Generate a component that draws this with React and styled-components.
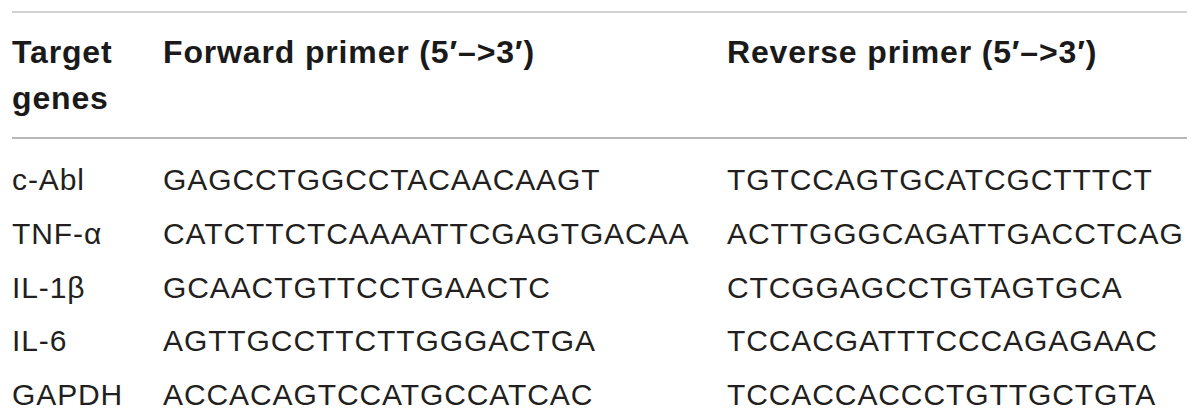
import styled, { createGlobalStyle } from "styled-components";

const GlobalStyle = createGlobalStyle`
  html, body {
    margin: 0;
    padding: 0;
    background: #fff;
  }
  body {
    font-family: "Liberation Sans", Arial, Helvetica, sans-serif;
    color: #231f20;
  }
`;

const Page = styled.div`
  padding: 11px 13px 0 12px;
`;

const Table = styled.div`
  display: grid;
  grid-template-columns: 151px 564px 1fr;
  border-top: 2px solid #d2d2d2;
`;

const HeadCell = styled.div`
  font-weight: 700;
  font-size: 32px;
  line-height: 46px;
  letter-spacing: 0.85px;
  color: #1a1a1a;
  padding: 16px 0 16px;
  border-bottom: 2px solid #b8b8b8;
  margin-bottom: 14px;
  white-space: nowrap;
`;

const Cell = styled.div`
  font-size: 30px;
  line-height: 53.75px;
  letter-spacing: 0.9px;
  white-space: nowrap;
  color: #231f20;
`;

const rows = [
  ["c-Abl", "GAGCCTGGCCTACAACAAGT", "TGTCCAGTGCATCGCTTTCT"],
  ["TNF-α", "CATCTTCTCAAAATTCGAGTGACAA", "ACTTGGGCAGATTGACCTCAG"],
  ["IL-1β", "GCAACTGTTCCTGAACTC", "CTCGGAGCCTGTAGTGCA"],
  ["IL-6", "AGTTGCCTTCTTGGGACTGA", "TCCACGATTTCCCAGAGAAC"],
  ["GAPDH", "ACCACAGTCCATGCCATCAC", "TCCACCACCCTGTTGCTGTA"],
];

export default function App() {
  return (
    <>
      <GlobalStyle />
      <Page>
        <Table>
          <HeadCell>
            Target
            <br />
            genes
          </HeadCell>
          <HeadCell>Forward primer (5′–&gt;3′)</HeadCell>
          <HeadCell>Reverse primer (5′–&gt;3′)</HeadCell>
          {rows.map((r) => [
            <Cell key={r[0]}>{r[0]}</Cell>,
            <Cell key={r[0] + "f"}>{r[1]}</Cell>,
            <Cell key={r[0] + "r"}>{r[2]}</Cell>,
          ])}
        </Table>
      </Page>
    </>
  );
}
